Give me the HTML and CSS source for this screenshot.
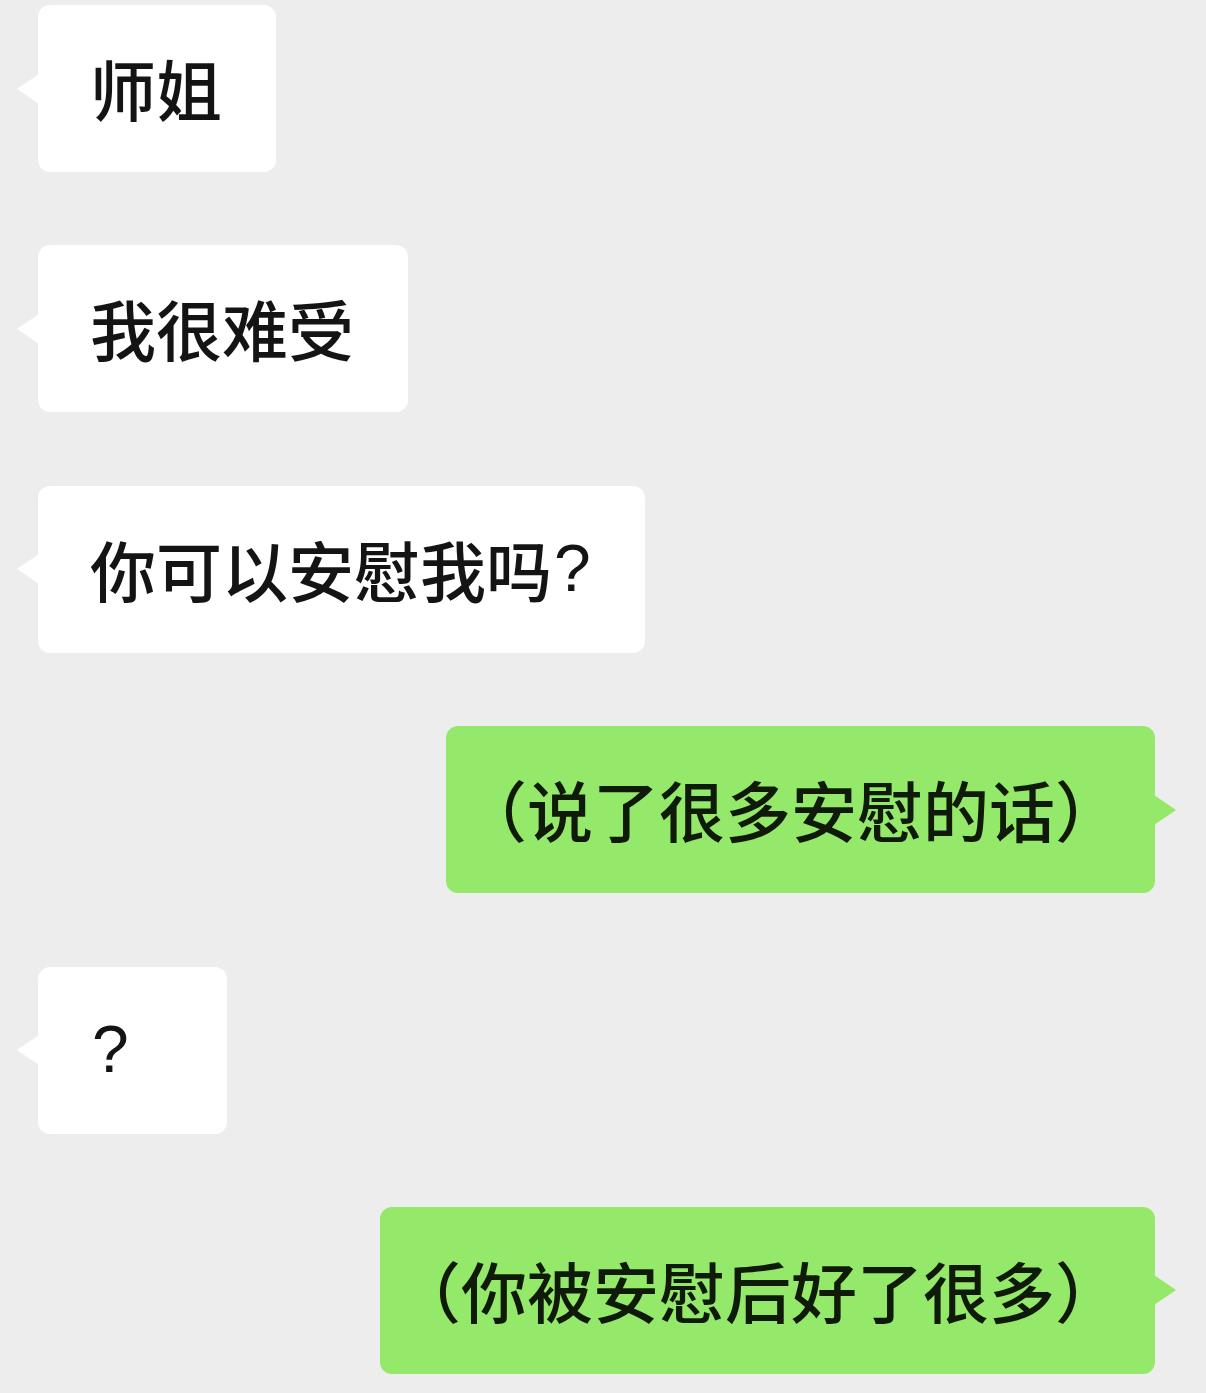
FILE: index.html
```html
<!DOCTYPE html>
<html lang="zh">
<head>
<meta charset="utf-8">
<link rel="stylesheet" href="styles.css">
</head>
<body>
<div class="chat">
  <div class="row left"><div class="bubble in">师姐</div></div>
  <div class="row left"><div class="bubble in">我很难受</div></div>
  <div class="row left"><div class="bubble in">你可以安慰我吗<span class="latin">?</span></div></div>
  <div class="row right"><div class="bubble out">（说了很多安慰的话）</div></div>
  <div class="row left"><div class="bubble in q"><span class="latin">?</span></div></div>
  <div class="row right"><div class="bubble out">（你被安慰后好了很多）</div></div>
</div>
</body>
</html>
```
FILE: styles.css
```css
html, body {
  margin: 0;
  padding: 0;
  background: #ededed;
}
body {
  font-family: "Noto Sans CJK SC", "Noto Sans", sans-serif;
  color: #141414;
}
.chat {
  display: flex;
  flex-direction: column;
  gap: 73.4px;
  padding: 5px 51px 0 38px;
}
.row {
  display: flex;
}
.row.left { justify-content: flex-start; }
.row.right { justify-content: flex-end; }
.bubble {
  position: relative;
  box-sizing: border-box;
  height: 167px;
  display: flex;
  align-items: center;
  font-size: 66px;
  font-weight: 500;
  line-height: 1;
  padding-bottom: 3px;
  border-radius: 12px;
  white-space: nowrap;
}
.latin {
  font-family: "Liberation Sans", Arial, sans-serif;
  font-weight: 400;
  margin-left: 2px;
}
.bubble.in {
  background: #ffffff;
  padding-left: 52px;
  padding-right: 54px;
}
.bubble.q {
  padding-right: 98px;
}
.bubble.out {
  background: #95e96a;
  color: #0f1a08;
  padding-left: 15px;
  padding-right: 34px;
}
.bubble::before {
  content: "";
  position: absolute;
  top: 50%;
  width: 0;
  height: 0;
  border-top: 15px solid transparent;
  border-bottom: 15px solid transparent;
  transform: translateY(-50%);
}
.bubble.in::before {
  left: -21px;
  border-right: 22px solid #ffffff;
}
.bubble.out::before {
  right: -21px;
  border-left: 22px solid #95e96a;
}
```
